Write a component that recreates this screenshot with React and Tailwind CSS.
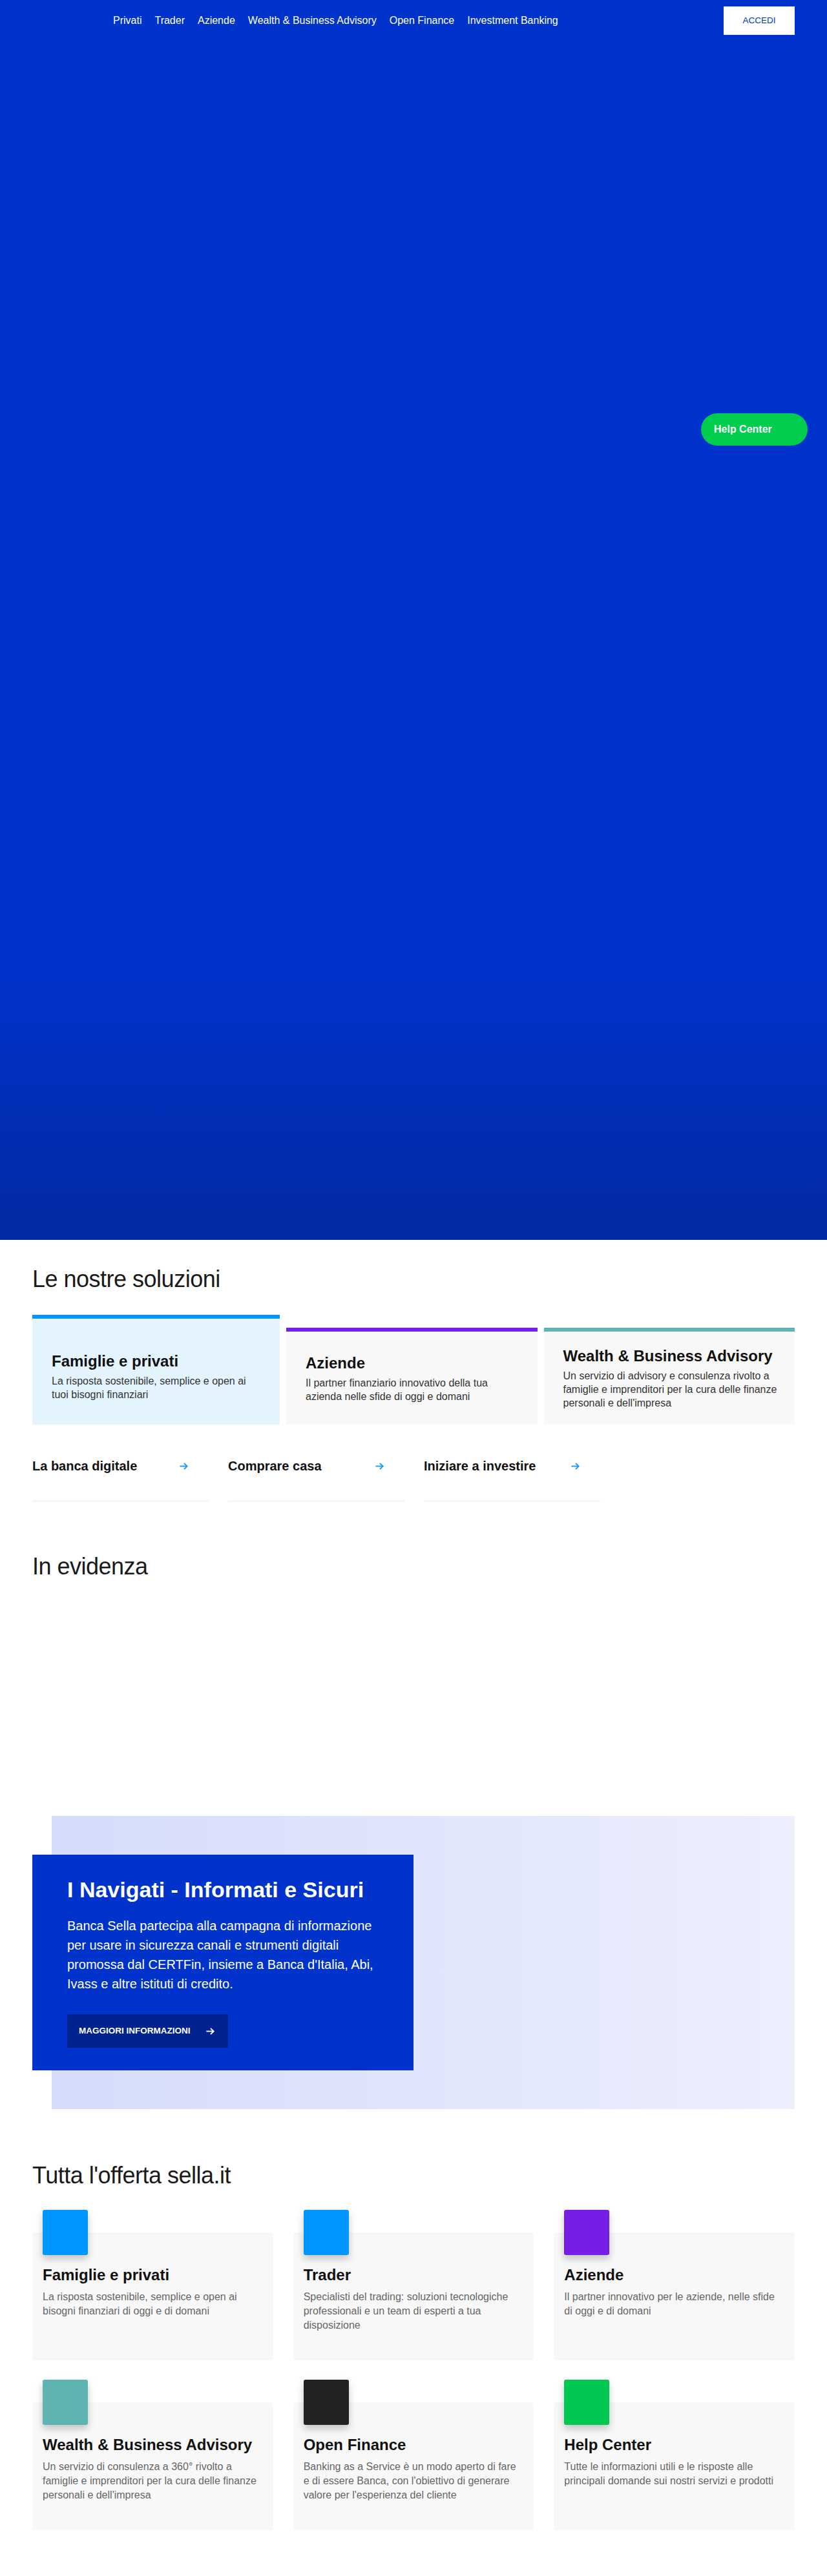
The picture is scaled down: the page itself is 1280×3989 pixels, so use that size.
import React from "react";

const navItems = [
  "Privati",
  "Trader",
  "Aziende",
  "Wealth & Business Advisory",
  "Open Finance",
  "Investment Banking",
];

const solutions = [
  {
    title: "Famiglie e privati",
    text: "La risposta sostenibile, semplice e open ai tuoi bisogni finanziari",
    bar: "bg-[#0096ff]",
    bg: "bg-[#e3f4fe]",
    tall: true,
  },
  {
    title: "Aziende",
    text: "Il partner finanziario innovativo della tua azienda nelle sfide di oggi e domani",
    bar: "bg-[#761ee6]",
    bg: "bg-[#f8f8f8]",
  },
  {
    title: "Wealth & Business Advisory",
    text: "Un servizio di advisory e consulenza rivolto a famiglie e imprenditori per la cura delle finanze personali e dell'impresa",
    bar: "bg-[#5fb3b0]",
    bg: "bg-[#f8f8f8]",
  },
];

const links = ["La banca digitale", "Comprare casa", "Iniziare a investire"];

const offers = [
  {
    title: "Famiglie e privati",
    text: "La risposta sostenibile, semplice e open ai bisogni finanziari di oggi e di domani",
    color: "bg-[#0096ff]",
  },
  {
    title: "Trader",
    text: "Specialisti del trading: soluzioni tecnologiche professionali e un team di esperti a tua disposizione",
    color: "bg-[#0096ff]",
  },
  {
    title: "Aziende",
    text: "Il partner innovativo per le aziende, nelle sfide di oggi e di domani",
    color: "bg-[#761ee6]",
  },
  {
    title: "Wealth & Business Advisory",
    text: "Un servizio di consulenza a 360° rivolto a famiglie e imprenditori per la cura delle finanze personali e dell'impresa",
    color: "bg-[#5fb3b0]",
  },
  {
    title: "Open Finance",
    text: "Banking as a Service è un modo aperto di fare e di essere Banca, con l'obiettivo di generare valore per l'esperienza del cliente",
    color: "bg-[#222222]",
  },
  {
    title: "Help Center",
    text: "Tutte le informazioni utili e le risposte alle principali domande sui nostri servizi e prodotti",
    color: "bg-[#00c850]",
  },
];

const Arrow = ({ className }) => (
  <svg viewBox="0 0 16 16" className={className} fill="none" stroke="currentColor" strokeWidth="2">
    <path d="M1.5 8h12" />
    <path d="M8.5 3l5 5-5 5" />
  </svg>
);

const App = () => {
  return (
    <div className="font-['Liberation_Sans',Arial,sans-serif] text-[#1a1a1a] bg-white">
      {/* hero */}
      <div className="relative h-[1920px] bg-[linear-gradient(180deg,#0033cc_0%,#0033cc_78%,#0329a2_100%)]">
        <header className="flex items-center justify-between h-[64px] pl-[175px] pr-[50px]">
          <nav className="flex gap-5 text-white text-[16px] leading-6">
            {navItems.map((item) => (
              <a key={item} href="#">
                {item}
              </a>
            ))}
          </nav>
          <button className="w-[110px] h-[44px] bg-white text-[#0033cc] text-[13.5px]">
            ACCEDI
          </button>
        </header>
        <button className="absolute right-[30px] top-[640px] w-[165px] h-[50px] rounded-full bg-[#00cc4e] text-white font-bold text-[16px] text-left pl-5">
          Help Center
        </button>
      </div>

      <div className="px-[50px]">
        {/* Le nostre soluzioni */}
        <h2 className="pt-[41px] text-[36px] leading-[40px] tracking-[-0.5px]">Le nostre soluzioni</h2>
        <div className="mt-[35px] flex items-end gap-[10px]">
          {solutions.map((s) => (
            <div
              key={s.title}
              className={`flex flex-col ${s.bg} ${s.tall ? "w-[383px] h-[170px]" : "flex-1 h-[150px]"}`}
            >
              <div className={`h-[6px] ${s.bar}`} />
              <div className={`flex-1 flex flex-col justify-center pl-[30px] pr-[26px] ${s.tall ? "pt-[14px]" : ""}`}>
                <h3 className="text-[24px] leading-[30px] font-bold text-[#111]">{s.title}</h3>
                <p className="mt-[5px] text-[16px] leading-[21px] text-[#333]">{s.text}</p>
              </div>
            </div>
          ))}
        </div>

        {/* quick links */}
        <div className="mt-[50px] flex gap-[30px]">
          {links.map((l) => (
            <a key={l} href="#" className="w-[273px] flex flex-col">
              <div className="flex items-center justify-between pr-[31px] h-[28px]">
                <span className="text-[20px] font-bold text-[#111]">{l}</span>
                <Arrow className="w-[15px] h-[15px] text-[#1a9bf5]" />
              </div>
              <div className="mt-[39px] h-[3px] bg-[#f5f5f5]" />
            </a>
          ))}
        </div>

        {/* In evidenza */}
        <h2 className="mt-[80px] text-[36px] leading-[40px] tracking-[-0.5px]">In evidenza</h2>

        <div className="mt-[366px] ml-[30px] py-[60px] bg-[linear-gradient(90deg,#d5dcfa,#eceffd)]">
          <div className="-ml-[30px] w-[590px] h-[334px] bg-[#0033cc] pl-[54px] pr-[54px] pt-[34px] text-white">
            <h3 className="text-[34px] leading-[40px] font-bold">I Navigati - Informati e Sicuri</h3>
            <p className="mt-[21px] text-[20px] leading-[30px]">
              Banca Sella partecipa alla campagna di informazione per usare in sicurezza canali e strumenti digitali promossa dal CERTFin, insieme a Banca d'Italia, Abi, Ivass e altre istituti di credito.
            </p>
            <button className="mt-[32px] w-[249px] h-[52px] bg-[#00228f] flex items-center pl-[18px] gap-[23px] text-[13.5px] font-bold">
              MAGGIORI INFORMAZIONI
              <Arrow className="w-[15px] h-[15px] text-white" />
            </button>
          </div>
        </div>

        {/* Tutta l'offerta */}
        <h2 className="mt-[83px] text-[36px] leading-[40px] tracking-[-0.5px]">Tutta l'offerta sella.it</h2>
        <div className="mt-[33px] pb-[70px] grid grid-cols-3 gap-x-[31px] gap-y-[30px]">
          {offers.map((o) => (
            <div key={o.title} className="pt-[35px]">
              <div className="flex flex-col h-[198px] bg-[#f8f8f8] rounded-[4px] pl-4 pr-5">
                <div className={`-mt-[35px] w-[70px] h-[70px] shrink-0 rounded-[3px] ${o.color} shadow-[0_6px_12px_rgba(0,0,0,0.22)]`} />
                <h3 className="mt-4 text-[24px] leading-[30px] font-bold text-[#111]">{o.title}</h3>
                <p className="mt-2 text-[16px] leading-[22px] text-[#666]">{o.text}</p>
              </div>
            </div>
          ))}
        </div>
      </div>
    </div>
  );
};

export default App;
